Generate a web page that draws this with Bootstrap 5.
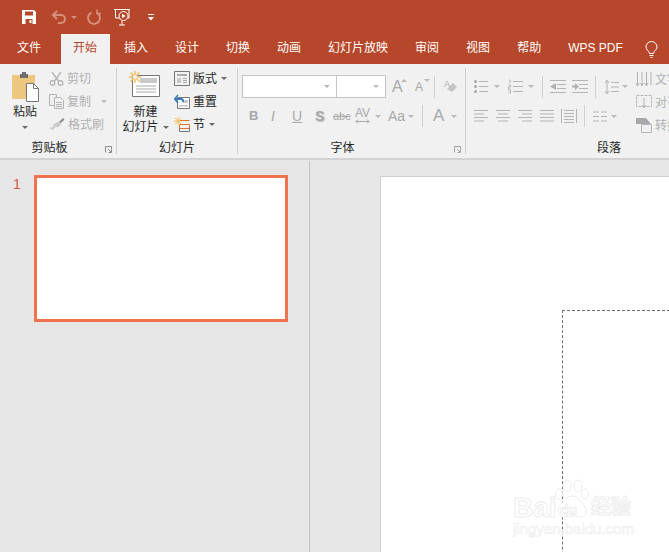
<!DOCTYPE html>
<html lang="zh-CN">
<head>
    <meta charset="UTF-8">
    <meta name="viewport" content="width=device-width, initial-scale=1.0">
    <title>PowerPoint</title>
    <link href="https://cdn.jsdelivr.net/npm/bootstrap@5.3.0/dist/css/bootstrap.min.css" rel="stylesheet">
    <style>
        html, body { height: 100%; overflow: hidden; }
        body { font-family: "Liberation Sans", "Noto Sans CJK SC", sans-serif; font-size: 12px; line-height: 14px; background: #e6e6e6; color: #262626; }
        svg { display: block; flex: none; }
        .app { width: 669px; height: 552px; overflow: hidden; }

        /* pixel margins for icon rows */
        .ml-3 { margin-left: 3px; } .ml-4 { margin-left: 4px; } .ml-5 { margin-left: 5px; }
        .ml-6 { margin-left: 6px; } .ml-7 { margin-left: 7px; } .ml-8 { margin-left: 8px; }
        .ml-9 { margin-left: 9px; } .ml-10 { margin-left: 10px; } .ml-12 { margin-left: 12px; }
        .ml-14 { margin-left: 14px; } .ml-17 { margin-left: 17px; }

        .titlebar { height: 34px; background: #b7472a; padding-left: 21px; }
        .tabs { height: 30px; background: #b7472a; flex-wrap: nowrap; padding-left: 5px; }
        .tabs .nav-link { color: #fff; padding: 0 12px; margin-right: 3px; height: 30px; line-height: 28px; white-space: nowrap; font-size: 12px; }
        .tabs .nav-link.active { background: #f1f1f1; color: #b7472a; margin-left: 5px; margin-right: 2px; width: 49px; }
        .tab-help { margin-left: 7px; }
        .qat-muted { border-top-color: #d58f7d !important; }

        .ribbon { height: 94px; background: #f1f1f1; border-bottom: 2px solid #d3d3d3; box-sizing: content-box; overflow: hidden; }
        .group { height: 86px; margin-top: 4px; position: relative; flex: none; border-right: 1px solid #d0d0d0; }
        .group-clip { width: 117px; }
        .group-slides { width: 121px; }
        .group-font { width: 228px; padding-left: 4px; }
        .group-para { width: 300px; border-right: 0; padding-left: 8px; }
        .group-body { height: 73px; }
        .group-label { height: 13px; text-align: center; color: #262626; line-height: 15px; }
        .label-clip { padding-right: 17px; }
        .label-font { padding-right: 22px; }
        .label-para { text-align: left; padding-left: 123px; }
        .launcher { position: absolute; right: 4px; bottom: 1px; }

        .off { color: #b0b0b0; }
        .caret-d { width: 0; height: 0; border-left: 3px solid transparent; border-right: 3px solid transparent; border-top: 3px solid #6a6a6a; flex: none; }
        .caret-d.off-c { border-top-color: #b8b8b8; }
        .cmd { height: 23px; }
        .cmd-col { margin-top: -1px; }
        .vsep { width: 1px; height: 22px; background: #d0d0d0; flex: none; }

        .paste-col { width: 49px; padding-left: 1px; }
        .paste-icon { margin-top: 3px; }
        .paste-text { margin-top: 3px; }
        .paste-caret { margin-top: 7px; }
        .new-col { width: 57px; }
        .new-icon { margin-top: 3px; margin-left: -2px; }
        .new-text { margin-top: 8px; }
        .new-text2 { margin-top: 1px; }

        .row-top { margin-top: 7px; height: 23px; }
        .row-bottom { margin-top: 8px; height: 20px; }
        .para-left { width: 162px; }
        .combo { height: 23px; background: #fff; border: 1px solid #c4c4c4; padding-right: 6px; }
        .combo-font { width: 95px; }
        .combo-size { width: 50px; margin-left: -1px; }

        .g { font-family: "Liberation Sans", sans-serif; color: #a8a8a8; flex: none; line-height: 16px; }
        .g-grow { font-size: 16px; width: 15px; }
        .g-shrink { font-size: 12px; width: 15px; }
        .g-tick { right: 0; top: 0; }
        .g-tick.up { transform: rotate(180deg); }
        .g-b { width: 21px; font-size: 13px; }
        .g-i { width: 22px; font-size: 14px; padding-left: 1px; }
        .g-u { width: 23px; font-size: 14px; }
        .g-s { width: 18px; font-size: 14px; text-shadow: 1px 1px 1px #bbb; }
        .g-abc { width: 22px; font-size: 11px; }
        .g-av { width: 15px; font-size: 12px; line-height: 11px; }
        .g-aa { width: 16px; font-size: 14px; }
        .g-a { width: 12px; font-size: 17px; }

        .workspace { height: 392px; padding-top: 1px; }
        .left-pane { width: 310px; border-right: 1px solid #c2c2c2; padding: 14px 0 0 13px; flex: none; }
        .slide-no { color: #d2593a; width: 21px; font-size: 14px; line-height: 14px; margin-top: 2px; }
        .thumb { width: 254px; height: 147px; background: #fff; border: 3px solid #f0734f; }
        .stage { padding: 15px 0 0 70px; min-width: 0; }
        .slide { width: 700px; height: 400px; background: #fff; border: 1px solid #d0d0d0; border-right: 0; padding: 133px 0 0 181px; flex: none; }
        .content-box { height: 300px; border-left: 1px dashed #6e6e6e; border-top: 1px dashed #6e6e6e; }

        .watermark { position: absolute; left: 513px; top: 479px; width: 125px; height: 58px; pointer-events: none; }
        .wm-text { position: absolute; font-family: "Liberation Sans", "Noto Sans CJK SC", sans-serif; color: #fff; -webkit-text-stroke: 1px #ededed; }
        .wm-bai { left: 0; top: 17px; font-size: 28px; line-height: 24px; font-weight: 700; }
        .wm-paw { position: absolute; left: 40px; top: 0; }
        .wm-du { left: 47px; top: 24px; font-size: 14px; line-height: 14px; font-weight: 700; -webkit-text-stroke: .6px #e6e6e6; }
        .wm-jy { left: 78px; top: 17px; font-size: 20px; line-height: 22px; font-weight: 700; }
        .wm-url { left: 0; top: 42px; font-size: 15px; line-height: 16px; white-space: nowrap; -webkit-text-stroke: .6px #ededed; }
    </style>
</head>
<body>
<div class="app position-relative">

    <!-- title bar -->
    <div class="titlebar d-flex align-items-center">
        <svg width="16" height="16" viewBox="0 0 16 16"><path d="M1 1h12l2 2v12H1z" fill="#fff"/><path d="M4 2.500h8v4H4z" fill="#b7472a"/><path d="M4.500 10h7v5h-7z" fill="#b7472a"/><path d="M8.500 11h2v3h-2z" fill="#fff"/></svg>
        <svg class="ml-14" width="16" height="16" viewBox="0 0 16 16" fill="none" stroke="#d58f7d" stroke-width="2"><path d="M2 6h8a4 4 0 0 1 0 8H7"/><path d="M6 2 2 6l4 4"/></svg>
        <div class="caret-d qat-muted ml-4"></div>
        <svg class="ml-9" width="16" height="16" viewBox="0 0 16 16" fill="none" stroke="#d58f7d" stroke-width="2"><path d="M5.500 3.500a6 6 0 1 0 5 0"/><path d="M11 .5v4h4" stroke-width="1.500"/></svg>
        <svg class="ml-12" width="17" height="18" viewBox="0 0 17 18" fill="none" stroke="#fff"><path d="M0 1.500h16M1.500 2v8h4M15 2v8h-1"/><circle cx="9.500" cy="8" r="4.500"/><path d="M8 5.700v4.600l3.600-2.300z" fill="#fff" stroke="none"/><path d="M8 13v4h3M5 17h3"/></svg>
        <svg class="ml-17" width="6" height="7" viewBox="0 0 6 7"><path d="M0 .5h6" stroke="#fff"/><path d="M0 3h6L3 6.500z" fill="#fff"/></svg>
    </div>

    <!-- tabs -->
    <ul class="nav tabs align-items-stretch">
        <li class="nav-item"><a class="nav-link" href="#">文件</a></li>
        <li class="nav-item"><a class="nav-link active" href="#">开始</a></li>
        <li class="nav-item"><a class="nav-link" href="#">插入</a></li>
        <li class="nav-item"><a class="nav-link" href="#">设计</a></li>
        <li class="nav-item"><a class="nav-link" href="#">切换</a></li>
        <li class="nav-item"><a class="nav-link" href="#">动画</a></li>
        <li class="nav-item"><a class="nav-link" href="#">幻灯片放映</a></li>
        <li class="nav-item"><a class="nav-link" href="#">审阅</a></li>
        <li class="nav-item"><a class="nav-link" href="#">视图</a></li>
        <li class="nav-item"><a class="nav-link" href="#">帮助</a></li>
        <li class="nav-item"><a class="nav-link" href="#">WPS PDF</a></li>
        <li class="nav-item tab-help d-flex align-items-center">
            <svg width="13" height="17" viewBox="0 0 13 17" fill="none" stroke="#fff"><path d="M4.500 12.500C4 9.500 1 9 1 6a5.500 5.500 0 0 1 11 0c0 3-3 3.500-3.500 6.500z"/><path d="M4.500 14.500h4M5.500 16.500h2"/></svg>
        </li>
    </ul>

    <!-- ribbon -->
    <div class="ribbon d-flex">

        <!-- 剪贴板 -->
        <div class="group group-clip">
            <div class="group-body d-flex">
                <div class="paste-col d-flex flex-column align-items-center">
                    <svg class="paste-icon" width="29" height="31" viewBox="0 0 29 31"><path d="M1 4h23v24H1z" fill="#eec77f"/><path d="M9 3h2V1h4v2h2v4H9z" fill="#6e6e6e"/><path d="M15.500 12.500h7l5 5v13h-12z" fill="#fff" stroke="#777"/><path d="M22.500 12.500v5h5" fill="none" stroke="#777"/></svg>
                    <div class="paste-text">粘贴</div>
                    <div class="caret-d paste-caret"></div>
                </div>
                <div class="cmd-col d-flex flex-column">
                    <div class="cmd d-flex align-items-center off">
                        <svg width="15" height="15" viewBox="0 0 15 15" fill="none" stroke="#b4b4b4" stroke-width="1.300"><path d="M3 1l6.500 9M12 1 5.500 10"/><circle cx="3.500" cy="12" r="2.300"/><circle cx="11.500" cy="12" r="2.300"/></svg>
                        <span class="ml-3">剪切</span>
                    </div>
                    <div class="cmd d-flex align-items-center off">
                        <svg width="15" height="15" viewBox="0 0 15 15" fill="#f1f1f1" stroke="#b4b4b4"><path d="M.5.500h7v11h-7z"/><path d="M5.500 3.500h6l3 3v8h-9z"/><path d="M7 8.500h6M7 10.500h6M7 12.500h6"/></svg>
                        <span class="ml-3">复制</span>
                        <div class="caret-d off-c ml-10"></div>
                    </div>
                    <div class="cmd d-flex align-items-center off">
                        <svg width="16" height="15" viewBox="0 0 16 15"><path d="M10 5l4-4 1.500 1.500-4 4z" fill="#8e8e8e"/><path d="M9 4.500l3 3-3 3-2.500-1L4 13 0 11l4-1 .5-2.500z" fill="#c9c9c9"/></svg>
                        <span class="ml-3">格式刷</span>
                    </div>
                </div>
            </div>
            <div class="group-label label-clip">剪贴板</div>
            <svg class="launcher" width="7" height="7" viewBox="0 0 7 7" fill="none" stroke="#8a8a8a"><path d="M.5 6.500v-6h6v3M3 3l3 3M3.500 6.500h3v-3"/></svg>
        </div>

        <!-- 幻灯片 -->
        <div class="group group-slides">
            <div class="group-body d-flex">
                <div class="new-col d-flex flex-column align-items-center">
                    <svg class="new-icon" width="31" height="26" viewBox="0 0 31 26"><path d="M3.500 4.500h27v21h-27z" fill="#fff" stroke="#767676"/><path d="M11 7h17v5H11z" fill="#c9c9c9"/><path d="M7 15h20M7 18h20M7 21h20" stroke="#a8a8a8"/><path d="M6 0v12M0 6h12M1.500 1.500l9 9M10.500 1.500l-9 9" stroke="#f1c05f" stroke-width="1.500"/><circle cx="6" cy="6" r="2" fill="#f1f1f1"/></svg>
                    <div class="new-text">新建</div>
                    <div class="new-text2 d-flex align-items-center text-nowrap">幻灯片<div class="caret-d ml-4"></div></div>
                </div>
                <div class="cmd-col d-flex flex-column">
                    <div class="cmd d-flex align-items-center">
                        <svg width="16" height="15" viewBox="0 0 16 15" fill="none" stroke="#777"><path d="M.5.500h15v14H.5z"/><path d="M3 3h10v2H3z" fill="#aaa" stroke="none"/><path d="M3 7h4v5H3z" fill="#c9c9c9" stroke="none"/><path d="M9 7.500h4M9 9.500h4M9 11.500h4" stroke="#aaa"/></svg>
                        <span class="ml-3">版式</span>
                        <div class="caret-d ml-4"></div>
                    </div>
                    <div class="cmd d-flex align-items-center">
                        <svg width="16" height="15" viewBox="0 0 16 15" fill="none"><path d="M3.500 3.500h12v11h-12z" stroke="#777" fill="#fff"/><path d="M9 6h5v3H9zM5 11h9v1.500H5z" fill="#c9c9c9"/><path d="M1 5h6a2 2 0 0 1 2 2v1" stroke="#3c7bbd" stroke-width="2"/><path d="M4 1 .5 5 4 9" stroke="#3c7bbd" stroke-width="1.500"/></svg>
                        <span class="ml-3">重置</span>
                    </div>
                    <div class="cmd d-flex align-items-center">
                        <svg width="16" height="15" viewBox="0 0 16 15" fill="none"><path d="M4 0v8M0 4h8M1 1l6 6M7 1 1 7" stroke="#f1c05f"/><path d="M6 3.500h9.500M5.500 7.500h10v4h-10z" stroke="#e2762f"/><path d="M5.500 14.500h10M5.500 11v3.500M15.500 11v3.500" stroke="#777"/></svg>
                        <span class="ml-3">节</span>
                        <div class="caret-d ml-4"></div>
                    </div>
                </div>
            </div>
            <div class="group-label">幻灯片</div>
        </div>

        <!-- 字体 -->
        <div class="group group-font">
            <div class="group-body d-flex flex-column">
                <div class="row-top d-flex align-items-center">
                    <div class="combo combo-font d-flex align-items-center justify-content-end"><div class="caret-d off-c"></div></div>
                    <div class="combo combo-size d-flex align-items-center justify-content-end"><div class="caret-d off-c"></div></div>
                    <span class="g g-grow ml-6 position-relative">A<span class="caret-d off-c g-tick up position-absolute"></span></span>
                    <span class="g g-shrink ml-8 position-relative">A<span class="caret-d off-c g-tick position-absolute"></span></span>
                    <div class="vsep ml-4"></div>
                    <svg class="ml-9" width="14" height="16" viewBox="0 0 14 16"><path d="M3 10l6-6 4 4-5 5z" fill="#c4c4c4"/><text x="0" y="8" font-family="Liberation Sans" font-size="9" fill="#a8a8a8">A</text></svg>
                </div>
                <div class="row-bottom d-flex align-items-center">
                    <span class="g g-b fw-bold ml-7">B</span>
                    <span class="g g-i fst-italic">I</span>
                    <span class="g g-u text-decoration-underline">U</span>
                    <span class="g g-s fw-bold">S</span>
                    <span class="g g-abc text-decoration-line-through">abc</span>
                    <div class="d-flex flex-column align-items-center">
                        <span class="g g-av">AV</span>
                        <svg width="15" height="5" viewBox="0 0 15 5" fill="none" stroke="#a8a8a8"><path d="M1 2.500h13M3 .5 1 2.500l2 2M12 .5l2 2-2 2"/></svg>
                    </div>
                    <div class="caret-d off-c ml-5"></div>
                    <span class="g g-aa ml-7">Aa</span>
                    <div class="caret-d off-c ml-4"></div>
                    <div class="vsep ml-8"></div>
                    <span class="g g-a ml-10">A</span>
                    <div class="caret-d off-c ml-6"></div>
                </div>
            </div>
            <div class="group-label label-font">字体</div>
            <svg class="launcher" width="7" height="7" viewBox="0 0 7 7" fill="none" stroke="#a0a0a0"><path d="M.5 6.500v-6h6v3M3 3l3 3M3.500 6.500h3v-3"/></svg>
        </div>

        <!-- 段落 -->
        <div class="group group-para">
            <div class="group-body d-flex">
                <div class="para-left flex-none d-flex flex-column">
                    <div class="row-top d-flex align-items-center">
                        <svg width="14" height="15" viewBox="0 0 14 15" stroke="#b4b4b4"><path d="M5 2.500h9M5 7.500h9M5 12.500h9"/><circle cx="1.500" cy="2.500" r="1.500" fill="#a8a8a8" stroke="none"/><circle cx="1.500" cy="7.500" r="1.500" fill="#a8a8a8" stroke="none"/><circle cx="1.500" cy="12.500" r="1.500" fill="#a8a8a8" stroke="none"/></svg>
                        <div class="caret-d off-c ml-6"></div>
                        <svg class="ml-8" width="15" height="15" viewBox="0 0 15 15" stroke="#b4b4b4"><path d="M5 2.500h10M5 7.500h10M5 12.500h10"/><path d="M1 1h1v3M.5 6h2v2h-2v2h2M.5 11h2v3h-2" fill="none"/></svg>
                        <div class="caret-d off-c ml-5"></div>
                        <div class="vsep ml-8"></div>
                        <svg class="ml-7" width="16" height="13" viewBox="0 0 16 13" stroke="#b4b4b4"><path d="M0 .5h16M7 4.500h9M7 8.500h9M0 12.500h16"/><path d="M6 3v7L0 6.500z" fill="#b0b0b0" stroke="none"/></svg>
                        <svg class="ml-6" width="16" height="13" viewBox="0 0 16 13" stroke="#b4b4b4"><path d="M0 .5h16M7 4.500h9M7 8.500h9M0 12.500h16"/><path d="M0 5.500h3V3l4 3.500-4 3.500V7.500H0z" fill="#b0b0b0" stroke="none"/></svg>
                        <div class="vsep ml-7"></div>
                        <svg class="ml-8" width="15" height="16" viewBox="0 0 15 16" stroke="#b4b4b4" fill="none"><path d="M7 3.500h8M7 8h8M7 12.500h8M3 2v12M1 4l2-3 2 3M1 12l2 3 2-3"/></svg>
                        <div class="caret-d off-c ml-3"></div>
                    </div>
                    <div class="row-bottom d-flex align-items-center">
                        <svg width="15" height="12" viewBox="0 0 15 12" stroke="#b4b4b4"><path d="M0 .5h14M0 4h10M0 7.500h14M0 11h10"/></svg>
                        <svg class="ml-7" width="15" height="12" viewBox="0 0 15 12" stroke="#b4b4b4"><path d="M0 .5h14M2 4h10M0 7.500h14M2 11h10"/></svg>
                        <svg class="ml-7" width="15" height="12" viewBox="0 0 15 12" stroke="#b4b4b4"><path d="M0 .5h14M4 4h10M0 7.500h14M4 11h10"/></svg>
                        <svg class="ml-7" width="15" height="12" viewBox="0 0 15 12" stroke="#b4b4b4"><path d="M0 .5h14M0 4h14M0 7.500h14M0 11h14"/></svg>
                        <svg class="ml-6" width="16" height="16" viewBox="0 0 16 16" stroke="#b4b4b4" fill="none"><path d="M.5 1v14M15.500 1v14M3 2.500h10M3 5.500h10M3 8.500h10M3 11.500h10M3 14.500h10"/></svg>
                        <div class="vsep ml-7"></div>
                        <svg class="ml-8" width="14" height="11" viewBox="0 0 14 11" stroke="#b4b4b4"><path d="M0 1h6M8 1h6M0 5.500h6M8 5.500h6M0 10h6M8 10h6"/></svg>
                        <div class="caret-d off-c ml-4"></div>
                    </div>
                </div>
                <!-- column cut by the window edge -->
                <div class="off d-flex flex-column text-nowrap">
                    <div class="cmd d-flex align-items-center">
                        <svg width="16" height="16" viewBox="0 0 16 16" stroke="#b4b4b4" fill="none"><path d="M1.500 0v13M6 0v13M10.500 0v13M15 0v13M0 11l1.500 3 1.500-3M4.500 11 6 14l1.500-3M9 11l1.500 3 1.500-3"/></svg>
                        <span class="ml-3">文字</span>
                    </div>
                    <div class="cmd d-flex align-items-center">
                        <svg width="16" height="15" viewBox="0 0 16 15" fill="none" stroke="#b4b4b4" stroke-dasharray="3 1"><path d="M.5.500h15v11H.5z"/><path d="M8 3v9M6 10l2 3 2-3" stroke-dasharray="none"/></svg>
                        <span class="ml-3">对齐</span>
                    </div>
                    <div class="cmd d-flex align-items-center">
                        <svg width="16" height="15" viewBox="0 0 16 15"><path d="M0 0h10l5 6H0z" fill="#a8a8a8"/><path d="M5.500 6.500h10v8h-10z" fill="#f1f1f1" stroke="#b4b4b4"/></svg>
                        <span class="ml-3">转换</span>
                    </div>
                </div>
            </div>
            <div class="group-label label-para">段落</div>
        </div>
    </div>

    <!-- workspace -->
    <div class="workspace d-flex">
        <div class="left-pane d-flex align-items-start">
            <div class="slide-no">1</div>
            <div class="thumb"></div>
        </div>
        <div class="stage flex-grow-1 d-flex">
            <div class="slide">
                <div class="content-box"></div>
            </div>
        </div>
    </div>

    <!-- watermark -->
    <div class="watermark">
        <span class="wm-text wm-bai">Bai</span>
        <svg class="wm-paw" width="38" height="42" viewBox="0 0 38 42" fill="#fff" stroke="#ededed"><ellipse cx="14" cy="7" rx="4" ry="6"/><ellipse cx="25" cy="7" rx="4" ry="6"/><ellipse cx="6" cy="15" rx="3.500" ry="5"/><ellipse cx="32" cy="15" rx="3.500" ry="5"/><path d="M19 17c6 0 9 6 13 11 3 5 0 11-6 10-4-1-9-1-14 0-6 1-8-5-6-10 4-5 7-11 13-11z"/></svg>
        <span class="wm-text wm-du">du</span>
        <span class="wm-text wm-jy">经验</span>
        <span class="wm-text wm-url">jingyan.baidu.com</span>
    </div>
</div>

<script src="https://cdn.jsdelivr.net/npm/bootstrap@5.3.0/dist/js/bootstrap.bundle.min.js"></script>
</body>
</html>
